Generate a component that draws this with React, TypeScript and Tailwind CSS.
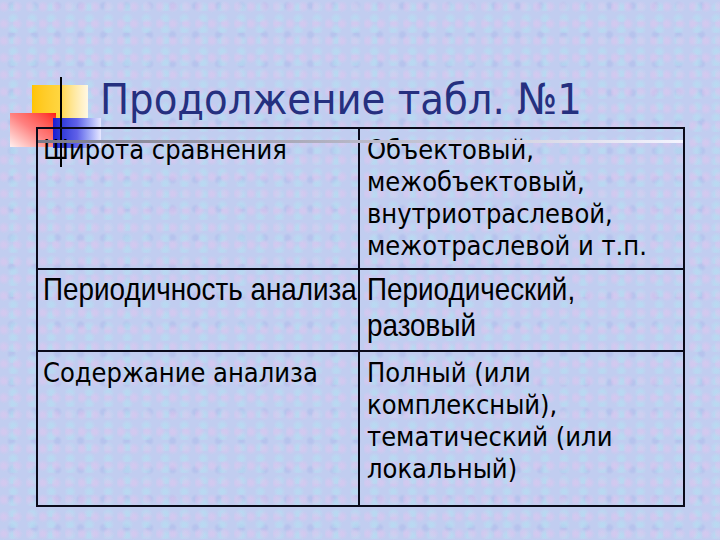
import React from 'react';

const rows = [
  {
    left: ['Широта сравнения'],
    right: ['Объектовый,', 'межобъектовый,', 'внутриотраслевой,', 'межотраслевой и т.п.'],
    h: 'h-[139px]',
    narrow: false,
  },
  {
    left: ['Периодичность анализа'],
    right: ['Периодический,', 'разовый'],
    h: 'h-[82px]',
    narrow: true,
  },
  {
    left: ['Содержание анализа'],
    right: ['Полный (или', 'комплексный),', 'тематический (или', 'локальный)'],
    h: 'h-[155px]',
    narrow: false,
  },
];

const Logo: React.FC = () => (
  <div className="absolute left-0 top-0 w-[110px] h-[170px] pointer-events-none">
    <div className="absolute left-[32px] top-[85px] w-[56px] h-[36px] bg-gradient-to-r from-[#ffc400] via-[#ffd640] to-[#fff8e4]" />
    <div className="absolute left-[10px] top-[113px] w-[46px] h-[34px] bg-gradient-to-bl from-[#ff1010] via-[#ff8080] to-[#fff0f0]" />
    <div className="absolute left-[53px] top-[118px] w-[48px] h-[30px] bg-gradient-to-r from-[#1a1ad0] via-[#6060e8] to-[#e8e8ff]" />
    <div className="absolute left-[60px] top-[77px] w-[2px] h-[90px] bg-black" />
  </div>
);

const Cell: React.FC<{ lines: string[]; narrow: boolean; className: string }> = ({ lines, narrow, className }) => (
  <div className={`whitespace-nowrap ${className}`}>
    {lines.map((t) =>
      narrow ? (
        <div key={t} className="font-['Liberation_Sans',sans-serif] text-[32px] leading-[36px] origin-left scale-x-[0.87]">
          {t}
        </div>
      ) : (
        <div key={t}>{t}</div>
      )
    )}
  </div>
);

export default function App() {
  return (
    <div className="relative w-[720px] h-[540px] overflow-hidden bg-[#c1cdf0] bg-[radial-gradient(circle_at_30%_40%,rgba(230,195,238,0.45)_0_2px,transparent_6px),radial-gradient(circle_at_70%_70%,rgba(178,228,242,0.5)_0_2px,transparent_6px),radial-gradient(circle_at_50%_20%,rgba(165,180,232,0.4)_0_2px,transparent_5px)] bg-[length:13px_17px,19px_11px,23px_29px]">
      <Logo />
      <div className="flex flex-col pt-[72px]">
        <h1 className="ml-[100px] h-[55px] text-[43px] leading-[55px] text-[#25307f] font-['DejaVu_Sans_Condensed','DejaVu_Sans',sans-serif] whitespace-nowrap">
          Продолжение табл. №1
        </h1>
        <div className="relative ml-[36px] w-[649px] border-2 border-[#0a0a1a] font-['DejaVu_Sans_Condensed','DejaVu_Sans',sans-serif] text-[27px] leading-[32px] text-black">
          {rows.map((r, i) => (
            <div key={i} className={`flex ${r.h} ${i > 0 ? 'border-t-2 border-[#0a0a1a]' : ''}`}>
              <Cell
                lines={r.left}
                narrow={r.narrow}
                className={`w-[322px] border-r-2 border-[#0a0a1a] pl-[5px] ${r.narrow ? 'pt-[1px]' : 'pt-[5px]'}`}
              />
              <Cell lines={r.right} narrow={r.narrow} className={`flex-1 pl-[7px] ${r.narrow ? 'pt-[1px]' : 'pt-[5px]'}`} />
            </div>
          ))}
          <div className="absolute left-0 right-0 top-[11px] h-[3px] bg-gradient-to-r from-[#7a7a88] via-[#b8b8c8] to-[#f4f4ff]" />
        </div>
      </div>
    </div>
  );
}
